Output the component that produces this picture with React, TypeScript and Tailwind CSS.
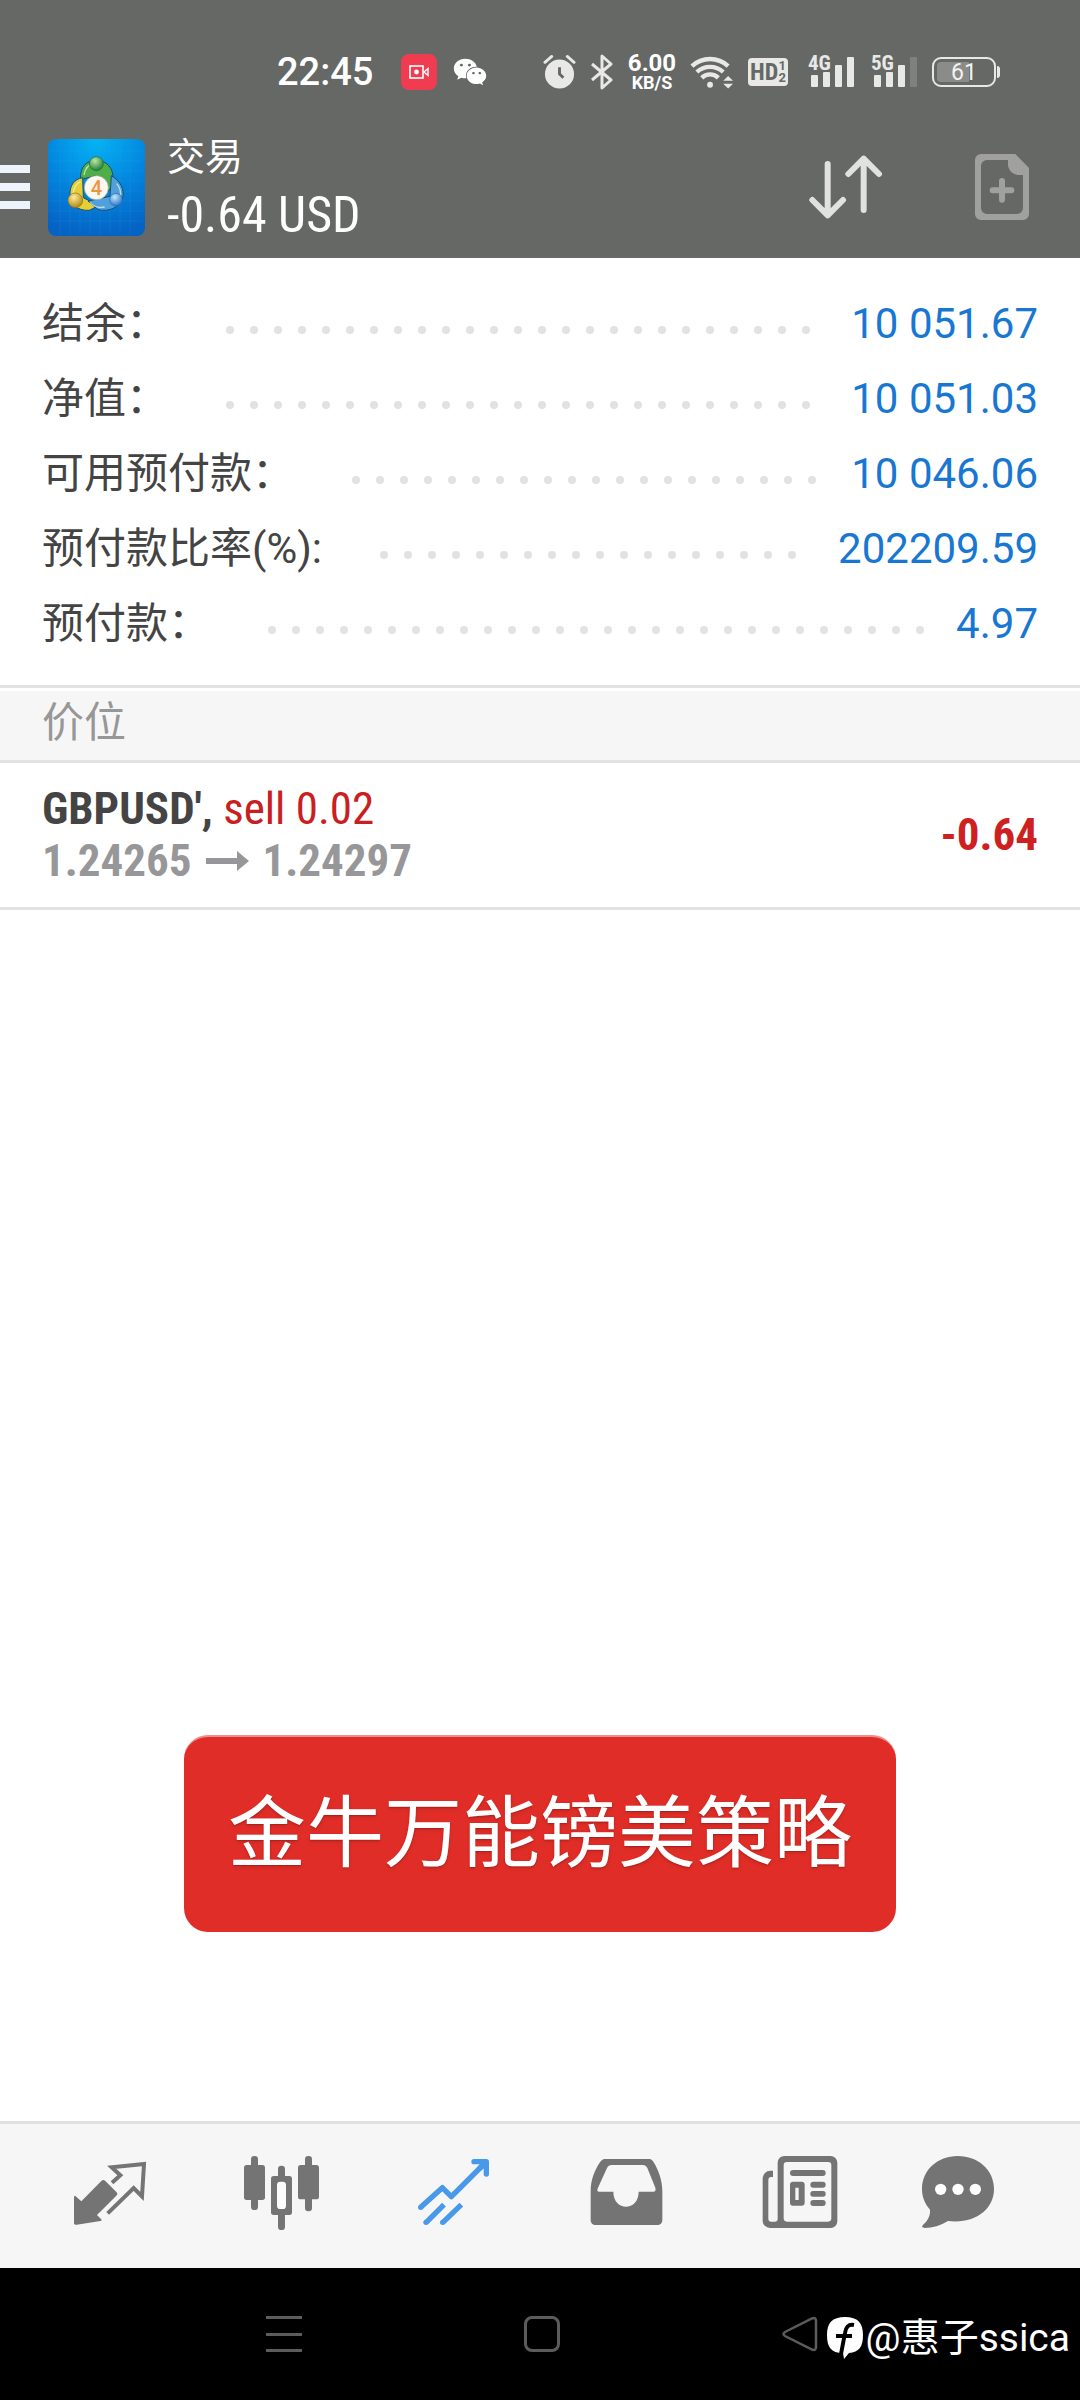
import type { ReactNode } from "react";
import { FaWeixin } from "react-icons/fa";

type SummaryItem = {
  label: string;
  value: string;
};

type Position = {
  symbol: string;
  side: string;
  openPrice: string;
  currentPrice: string;
  profit: string;
};

type Tab = {
  name: string;
  icon: ReactNode;
  active?: boolean;
};

const summary: SummaryItem[] = [
  { label: "结余：", value: "10 051.67" },
  { label: "净值：", value: "10 051.03" },
  { label: "可用预付款：", value: "10 046.06" },
  { label: "预付款比率(%):", value: "202209.59" },
  { label: "预付款：", value: "4.97" },
];

const positions: Position[] = [
  {
    symbol: "GBPUSD',",
    side: "sell 0.02",
    openPrice: "1.24265",
    currentPrice: "1.24297",
    profit: "-0.64",
  },
];

const condensed =
  "font-['Roboto_Condensed','Liberation_Sans_Narrow',Roboto,sans-serif]";

function SignalIcon({ label, weak = false }: { label: string; weak?: boolean }) {
  return (
    <svg
      width="47"
      height="34"
      viewBox="0 0 47 34"
      fill="#e8e8e6"
      className="overflow-visible"
    >
      <rect x="3" y="20" width="7" height="12" rx="1" />
      <rect x="15" y="17" width="7" height="15" rx="1" />
      <rect x="27" y="10" width="7" height="22" rx="1" />
      <rect x="39" y="2" width="7" height="30" rx="1" opacity={weak ? 0.2 : 1} />
      <text
        x="0"
        y="15"
        fontSize="21"
        fontWeight="700"
        className={condensed}
        stroke="#666865"
        strokeWidth="2"
        paintOrder="stroke"
      >
        {label}
      </text>
    </svg>
  );
}

function StatusBar() {
  return (
    <div className="flex h-28 items-center justify-between pt-8 pr-[80px] pl-[277px] text-[#f2f2f0]">
      <div className="flex items-center">
        <span className="text-[38px] leading-none font-medium text-white">22:45</span>
        <span className="ml-7 flex size-9 items-center justify-center rounded-lg bg-[#ef3c50]">
          <svg width="20" height="14" viewBox="0 0 20 14" fill="none" stroke="#fff">
            <rect x="1" y="1" width="13" height="12" strokeWidth="1.6" />
            <circle cx="7.5" cy="7" r="2.4" fill="#fff" stroke="none" />
            <path d="M15 7l4-3.5v7z" strokeWidth="1.4" />
          </svg>
        </span>
        <FaWeixin size={34} className="ml-4 text-white" />
      </div>

      <div className="flex items-center gap-[14px]">
        <svg width="33" height="36" viewBox="0 0 34 36">
          <circle cx="17" cy="20" r="15" fill="#e8e8e6" />
          <path
            d="M2 8l7-6M32 8l-7-6"
            stroke="#e8e8e6"
            strokeWidth="3"
            strokeLinecap="round"
          />
          <path d="M17 13v7l4 4" fill="none" stroke="#666865" strokeWidth="3" />
        </svg>
        <svg
          width="24"
          height="36"
          viewBox="0 0 24 36"
          fill="none"
          stroke="#e8e8e6"
          strokeWidth="3"
          strokeLinejoin="round"
        >
          <path d="M2 10l19 16-9 8V2l9 8L2 26" />
        </svg>
        <div className="flex w-12 flex-col items-center font-bold text-white">
          <span className="text-[24px] leading-[21px]">6.00</span>
          <span className="text-[18px] leading-[18px]">KB/S</span>
        </div>
        <svg width="44" height="34" viewBox="0 0 45 34" fill="none" stroke="#e8e8e6">
          <path d="M2 11a27 27 0 0 1 37 0" strokeWidth="4.5" />
          <path d="M7 17a20 20 0 0 1 27 0" strokeWidth="4.5" />
          <path d="M12 23a12 12 0 0 1 17 0" strokeWidth="4.5" />
          <circle cx="20.5" cy="30" r="3" fill="#e8e8e6" stroke="none" />
          <path d="M39 21l5 5H34zM39 34l5-5H34z" fill="#e8e8e6" stroke="none" />
        </svg>
        <div className="flex h-7 w-10 items-center justify-center rounded bg-[#e8e8e6] font-bold text-[#666865]">
          <span className={`text-[24px] leading-none ${condensed}`}>HD</span>
          <span className="flex flex-col text-[13px] leading-[12px]">
            <span>1</span>
            <span>2</span>
          </span>
        </div>
        <div className="flex gap-4 pl-1.5">
          <SignalIcon label="4G" />
          <SignalIcon label="5G" weak />
        </div>
        <div className="flex items-center gap-px">
          <div className="flex h-[30px] w-16 rounded-[9px] border-2 border-[#e8e8e6] p-[3px]">
            <div className="flex w-full items-center justify-center rounded bg-linear-to-r from-[#8b8c8a] from-60% to-[#666865] to-60% text-[23px] leading-none text-[#f2f2f0]">
              61
            </div>
          </div>
          <div className="h-3 w-[3px] rounded-r bg-[#e8e8e6]" />
        </div>
      </div>
    </div>
  );
}

function AppLogo() {
  return (
    <svg width="97" height="97" viewBox="0 0 291 291" className="shrink-0">
      <defs>
        <radialGradient id="sky" cx="50%" cy="0%" r="100%">
          <stop offset="0" stopColor="#04b4f4" />
          <stop offset="0.55" stopColor="#0384de" />
          <stop offset="1" stopColor="#0563c4" />
        </radialGradient>
        <radialGradient id="greenBall" cx="40%" cy="30%" r="70%">
          <stop offset="0" stopColor="#b9e8a0" />
          <stop offset="1" stopColor="#24803a" />
        </radialGradient>
        <radialGradient id="goldBall" cx="40%" cy="30%" r="70%">
          <stop offset="0" stopColor="#ffeb9c" />
          <stop offset="1" stopColor="#b28a12" />
        </radialGradient>
        <radialGradient id="blueBall" cx="40%" cy="30%" r="70%">
          <stop offset="0" stopColor="#c5e6ff" />
          <stop offset="1" stopColor="#2a78c8" />
        </radialGradient>
      </defs>
      <rect width="291" height="291" rx="24" fill="url(#sky)" />
      <path
        d="M36 6v279M66 6v279M96 6v279M126 6v279M156 6v279M186 6v279M216 6v279M246 6v279M6 36h279M6 66h279M6 96h279M6 126h279M6 156h279M6 186h279M6 216h279M6 246h279"
        stroke="#3fb0ef"
        strokeWidth="2"
        opacity="0.2"
      />
      <g stroke="#14506e" strokeWidth="3">
        <path
          d="M98 122C94 84 116 64 145 64s52 22 50 56c-1 20-8 34-20 40l-32-50z"
          fill="#4fae48"
        />
        <path
          d="M104 116c-26 4-38 24-38 48 0 30 20 52 58 50l28-14-46-24z"
          fill="#e6cf36"
        />
        <path
          d="M190 110c28 16 40 42 34 66-8 28-40 44-74 36l-30-26 66-14z"
          fill="#4fa0dc"
        />
      </g>
      <path
        d="M108 108c4-20 14-32 28-34M76 166c0-20 10-34 22-38M206 134c12 14 14 28 10 42M126 190c12 14 26 18 44 14"
        fill="none"
        stroke="#e7f6d8"
        strokeWidth="4"
        opacity="0.7"
      />
      <circle cx="145" cy="74" r="21" fill="url(#greenBall)" stroke="#1c6a34" strokeWidth="2" />
      <circle cx="82" cy="184" r="22" fill="url(#goldBall)" stroke="#87721c" strokeWidth="2" />
      <circle cx="204" cy="182" r="19" fill="url(#blueBall)" stroke="#2668a8" strokeWidth="2" />
      <circle cx="145" cy="146" r="36" fill="#fbf8f2" stroke="#b0a88e" strokeWidth="2" />
      <text
        x="145"
        y="168"
        textAnchor="middle"
        fontSize="60"
        fontWeight="500"
        fill="#ee9440"
      >
        4
      </text>
    </svg>
  );
}

function AppHeader() {
  return (
    <header className="flex h-[146px] items-center pt-1 text-white">
      <button type="button" aria-label="菜单" className="flex w-[30px] flex-col gap-[10px]">
        <span className="h-2 w-full bg-[#eef4fc]" />
        <span className="h-2 w-full bg-[#eef4fc]" />
        <span className="h-2 w-full bg-[#eef4fc]" />
      </button>
      <div className="ml-[18px]">
        <AppLogo />
      </div>
      <div className="ml-[22px] flex flex-1 flex-col">
        <h1 className="text-[38px] leading-[56px]">交易</h1>
        <p className={`text-[50px] leading-[60px] ${condensed}`}>-0.64 USD</p>
      </div>
      <button type="button" aria-label="排序" className="mr-[92px]">
        <svg
          width="74"
          height="66"
          viewBox="0 0 222 198"
          fill="none"
          stroke="#e1e2e0"
          strokeWidth="18"
          strokeLinecap="round"
          strokeLinejoin="round"
        >
          <path d="M56 30v154M10 138l46 46 46-46" />
          <path d="M164 168V14M118 60l46-46 46 46" />
        </svg>
      </button>
      <button type="button" aria-label="新订单" className="mr-[51px]">
        <svg width="54" height="66" viewBox="0 0 162 198">
          <path
            d="M18 0h103l41 42v138a18 18 0 0 1-18 18H18a18 18 0 0 1-18-18V18A18 18 0 0 1 18 0zM36 18a18 18 0 0 0-18 18v126a18 18 0 0 0 18 18h90a18 18 0 0 0 18-18V63h-12a32 32 0 0 1-33-32V18z"
            fill="#a0a19f"
            fillRule="evenodd"
          />
          <path
            d="M81 81v56M53 109h56"
            stroke="#a0a19f"
            strokeWidth="18"
            strokeLinecap="round"
          />
        </svg>
      </button>
    </header>
  );
}

// Only whole dots stay visible, the rest wrap onto a hidden line
function DotLeader() {
  return (
    <span
      aria-hidden="true"
      className="mt-3 mr-5 ml-[50px] flex h-2 flex-1 flex-wrap overflow-hidden"
    >
      {Array.from({ length: 60 }, (_, index) => (
        <span key={index} className="flex h-2 w-6 justify-center">
          <span className="size-2 rounded-full bg-[#e2e2e2]" />
        </span>
      ))}
    </span>
  );
}

function AccountSummary() {
  return (
    <dl className="border-b-3 border-[#e2e2e2] px-[42px] pt-7 pb-6 text-[42px] leading-[75px]">
      {summary.map((item) => (
        <div key={item.label} className="flex h-[75px] items-center">
          <dt className="text-[#444444]">{item.label}</dt>
          <DotLeader />
          <dd className="text-[#1877d2]">{item.value}</dd>
        </div>
      ))}
    </dl>
  );
}

function PositionRow({ position }: { position: Position }) {
  return (
    <li
      className={`flex h-[147px] items-center justify-between border-b-3 border-[#e2e2e2] px-[42px] text-[45px] ${condensed}`}
    >
      <div className="leading-[52px]">
        <p>
          <span className="font-bold text-[#444444]">{position.symbol}</span>{" "}
          <span className="text-[#c8201f]">{position.side}</span>
        </p>
        <p className="flex items-center font-bold text-[#97979a]">
          {position.openPrice}
          <svg width="43" height="20" viewBox="0 0 43 20" className="mx-3.5">
            <path d="M0 7h31V0l12 10-12 10v-7H0z" fill="currentColor" />
          </svg>
          {position.currentPrice}
        </p>
      </div>
      <p className="font-bold text-[#cf2021]">{position.profit}</p>
    </li>
  );
}

const tabs: Tab[] = [
  {
    name: "行情",
    icon: (
      <svg width="84" height="84" viewBox="84 129 252 252" fill="currentColor">
        <path d="M102 264c0-4 3-4 5-2l17 15 60-61c4-4 8-4 12 0l33 33c4 4 4 7 0 11l-58 58 12 12c3 3 2 6-2 6l-71 11c-5 1-8-1-8-6z" />
        <path
          d="M216 221l25-22-26-24 97-10-6 97-25-25-78 76"
          fill="none"
          stroke="currentColor"
          strokeWidth="12"
        />
      </svg>
    ),
  },
  {
    name: "图表",
    icon: (
      <svg width="84" height="84" viewBox="600 129 252 252" fill="currentColor">
        <rect x="633" y="141" width="21" height="162" rx="10" />
        <rect x="612" y="168" width="63" height="105" rx="8" />
        <rect x="795" y="141" width="21" height="166" rx="10" />
        <rect x="774" y="168" width="63" height="103" rx="8" />
        <rect x="714" y="170" width="21" height="193" rx="10" />
        <rect x="693" y="201" width="63" height="117" rx="8" />
        <rect x="711" y="218" width="27" height="82" rx="10" fill="#fbfbfb" />
      </svg>
    ),
  },
  {
    name: "交易",
    active: true,
    icon: (
      <svg
        width="84"
        height="84"
        viewBox="1116 129 252 252"
        fill="none"
        stroke="currentColor"
        strokeWidth="16"
      >
        <path
          d="M1142 295l65-59 27 27 98-98M1158 341l54-54M1208 341l56-54"
          strokeLinejoin="round"
        />
        <circle cx="1142" cy="295" r="8" fill="currentColor" stroke="none" />
        <circle cx="1158" cy="340" r="8" fill="currentColor" stroke="none" />
        <circle cx="1208" cy="340" r="8" fill="currentColor" stroke="none" />
        <path d="M1302 158h37v37M1338 159l-18 18" strokeLinecap="round" strokeLinejoin="round" />
      </svg>
    ),
  },
  {
    name: "历史",
    icon: (
      <svg width="84" height="84" viewBox="132 129 252 252" fill="currentColor">
        <path
          d="M194 150h134c6 0 10 4 13 10 15 24 26 56 26 86v86c0 10-6 16-16 16H168c-10 0-16-6-16-16v-86c0-30 11-62 28-86 4-6 8-10 14-10zM216 168c-8 0-12 3-15 9l-27 59c-4 8-2 12 4 12h42c0 60 76 60 76 0h44c6 0 8-4 6-12l-24-59c-3-6-7-9-14-9z"
          fillRule="evenodd"
        />
      </svg>
    ),
  },
  {
    name: "新闻",
    icon: (
      <svg width="84" height="84" viewBox="648 129 252 252" fill="currentColor">
        <path
          d="M734 141h138a20 20 0 0 1 20 20v176a20 20 0 0 1-20 20H690a22 22 0 0 1-22-22V208a23 23 0 0 1 23-23h8v19h-5a9 9 0 0 0-9 9v116a9 9 0 0 0 9 9h10a9 9 0 0 0 9-9V161a20 20 0 0 1 21-20zM741 159a10 10 0 0 0-10 10v159a10 10 0 0 0 10 10h123a10 10 0 0 0 10-10V169a10 10 0 0 0-10-10z"
          fillRule="evenodd"
        />
        <rect x="750" y="183" width="107" height="18" rx="9" />
        <path
          d="M759 218h26a9 9 0 0 1 9 9v54a9 9 0 0 1-9 9h-26a9 9 0 0 1-9-9v-54a9 9 0 0 1 9-9zM766 236v37h10v-37z"
          fillRule="evenodd"
        />
        <rect x="811" y="218" width="46" height="18" rx="9" />
        <rect x="811" y="246" width="46" height="17" rx="8" />
        <rect x="811" y="273" width="46" height="18" rx="9" />
      </svg>
    ),
  },
  {
    name: "消息",
    icon: (
      <svg width="108" height="84" viewBox="1128 129 324 252" fill="currentColor">
        <path d="M1253 141c62 0 109 42 109 99 0 60-54 105-138 96-22 14-46 21-70 21-8 0-10-5-3-11 14-14 20-26 19-44-14-16-24-36-24-62 0-56 46-99 107-99z" />
        <g fill="#fff">
          <circle cx="1202" cy="241" r="17" />
          <circle cx="1254" cy="241" r="17" />
          <circle cx="1306" cy="241" r="17" />
        </g>
      </svg>
    ),
  },
];

function TabBar() {
  return (
    <nav className="flex h-[147px] items-center border-t-3 border-[#e0e0e0] bg-[#f6f6f6] px-6 pb-1">
      {tabs.map((tab) => (
        <button
          key={tab.name}
          type="button"
          aria-label={tab.name}
          aria-current={tab.active ? "page" : undefined}
          className={`flex flex-1 basis-0 justify-center ${tab.active ? "text-[#4899ea]" : "text-[#747474]"}`}
        >
          {tab.icon}
        </button>
      ))}
    </nav>
  );
}

function SystemNav() {
  return (
    <div className="relative flex h-[132px] items-center justify-between bg-black pr-[262px] pl-[266px]">
      <button type="button" aria-label="最近任务" className="flex h-9 w-9 flex-col justify-between">
        <span className="h-[3px] w-full bg-[#5c5c5c]" />
        <span className="h-[3px] w-full bg-[#5c5c5c]" />
        <span className="h-[3px] w-full bg-[#5c5c5c]" />
      </button>
      <button
        type="button"
        aria-label="主屏幕"
        className="size-9 rounded-lg border-3 border-[#5c5c5c]"
      />
      <button type="button" aria-label="返回">
        <svg width="36" height="36" viewBox="0 0 36 36" fill="none" stroke="#5c5c5c">
          <path
            d="M3 16L30 2.5Q34 1 34 5v26q0 4-4 2.5L3 20q-3-2 0-4z"
            strokeWidth="2.5"
          />
        </svg>
      </button>
      <div className="absolute top-[46px] right-[10px] flex items-center gap-[2px] text-white">
        <svg width="38" height="44" viewBox="0 0 38 44">
          <path
            d="M19 1C32 1 37 7 37 19s-4 17-14 18l-5 6-1-6C5 37 1 31 1 19S6 1 19 1z"
            fill="#fff"
          />
          <path
            d="M28 9c-6-1-8 2-9 8l-4 21M10 20h16"
            fill="none"
            stroke="#000"
            strokeWidth="4"
          />
        </svg>
        <span className="text-[39px] leading-[48px]">@惠子ssica</span>
      </div>
    </div>
  );
}

export default function App() {
  return (
    <div className="flex min-h-screen flex-col bg-white font-[Roboto,'Noto_Sans_CJK_SC',sans-serif]">
      <div className="bg-[#666865]">
        <StatusBar />
        <AppHeader />
      </div>

      <main className="flex flex-1 flex-col">
        <AccountSummary />
        <h2 className="mt-[3px] h-[72px] border-b-3 border-[#e2e2e2] bg-[#f6f6f6] px-[42px] text-[42px] leading-[64px] text-[#979797]">
          价位
        </h2>
        <ul>
          {positions.map((position) => (
            <PositionRow key={position.symbol} position={position} />
          ))}
        </ul>
        <p className="mx-auto mt-auto mb-[189px] rounded-3xl border-t-2 border-[#ee8f8b] bg-[#e12d27] px-11 text-center text-[78px] leading-[195px] text-white text-shadow-md">
          金牛万能镑美策略
        </p>
      </main>

      <TabBar />
      <SystemNav />
    </div>
  );
}
